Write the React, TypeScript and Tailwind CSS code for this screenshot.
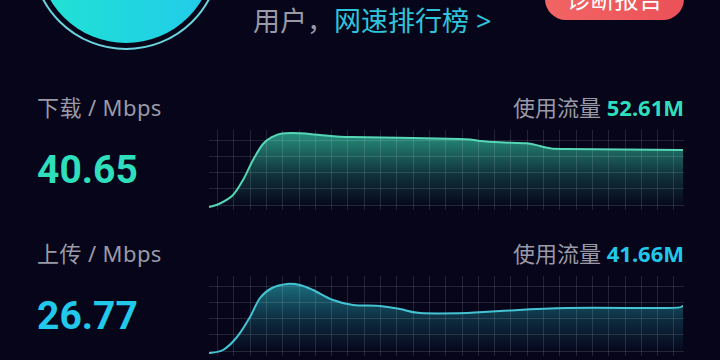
import React from "react";

type Pt = [number, number];

const DOWN: Pt[] = [
  [0, 77], [11, 73.5], [24, 65], [34, 50], [44, 30], [54, 14], [63, 7],
  [73, 3.5], [91, 3.3], [111, 5], [131, 6.7], [158, 7.3], [251, 9],
  [271, 11], [291, 12.3], [318, 13.3], [331, 16], [341, 18.3], [358, 19],
  [474, 20],
];

const UP: Pt[] = [
  [0, 77], [14, 74], [28, 61], [41, 41], [51, 22], [63, 12], [78, 8],
  [91, 9], [104, 14], [124, 24], [144, 29], [171, 30], [191, 33],
  [211, 37], [258, 37], [291, 35], [358, 32], [458, 32], [474, 30],
];

// catmull-rom -> cubic bezier
function smooth(pts: Pt[]) {
  let d = `M${pts[0][0]},${pts[0][1]}`;
  for (let i = 0; i < pts.length - 1; i++) {
    const p0 = pts[i - 1] ?? pts[i];
    const p1 = pts[i];
    const p2 = pts[i + 1];
    const p3 = pts[i + 2] ?? p2;
    const c1x = p1[0] + (p2[0] - p0[0]) / 6;
    const c1y = p1[1] + (p2[1] - p0[1]) / 6;
    const c2x = p2[0] - (p3[0] - p1[0]) / 6;
    const c2y = p2[1] - (p3[1] - p1[1]) / 6;
    d += ` C${c1x.toFixed(1)},${c1y.toFixed(1)} ${c2x.toFixed(1)},${c2y.toFixed(1)} ${p2[0]},${p2[1]}`;
  }
  return d;
}

function Chart({ id, pts, stroke, fill }: { id: string; pts: Pt[]; stroke: string; fill: string }) {
  const line = smooth(pts);
  const area = `${line} L474,78 L0,78 Z`;
  const rows = [10, 26, 42, 58, 75];
  const cols = Array.from({ length: 29 }, (_, i) => 8 + i * 16.3);
  return (
    <svg width="475" height="80" viewBox="0 0 475 80" className="block shrink-0">
      <defs>
        <linearGradient id={id} x1="0" y1="0" x2="0" y2="1">
          <stop offset="0" stopColor={fill} stopOpacity="0.9" />
          <stop offset="0.55" stopColor={fill} stopOpacity="0.3" />
          <stop offset="1" stopColor={fill} stopOpacity="0" />
        </linearGradient>
      </defs>
      <path d={area} fill={`url(#${id})`} />
      <g stroke="#ffffff" strokeOpacity="0.12" strokeWidth="1">
        {rows.map((y) => (
          <line key={`r${y}`} x1="0" x2="475" y1={y + 0.5} y2={y + 0.5} />
        ))}
        {cols.map((x) => (
          <line key={`c${x}`} x1={Math.round(x) + 0.5} x2={Math.round(x) + 0.5} y1="0" y2="80" />
        ))}
      </g>
      <path d={line} fill="none" stroke={stroke} strokeWidth="2" />
    </svg>
  );
}

function Section({
  label, value, usage, color, chart,
}: { label: string; value: string; usage: string; color: string; chart: React.ReactNode }) {
  return (
    <div>
      <div className="flex items-center justify-between text-[22px] leading-[28px] text-[#9a9aa6]">
        <span className="tracking-[0.4px]">{label}</span>
        <span>
          使用流量 <span className={`font-bold ${color}`}>{usage}</span>
        </span>
      </div>
      <div className="mt-[9px] flex items-center">
        <div className={`w-[172px] font-['Roboto',sans-serif] text-[39px] font-bold leading-none ${color}`}>{value}</div>
        {chart}
      </div>
    </div>
  );
}

export default function App() {
  return (
    <div
      className="h-[360px] w-[720px] overflow-hidden bg-[#06051a]"
      style={{ fontFamily: '"Noto Sans", "Noto Sans CJK SC", sans-serif' }}
    >
      {/* header */}
      <div className="flex h-[50px] items-start">
        <div className="-mt-[140px] ml-[31px] h-[190px] w-[190px] shrink-0 rounded-full border-2 border-[#6ad4dc] p-[5px]">
          <div className="h-full w-full rounded-full bg-gradient-to-r from-[#22e2d2] to-[#22cbea]" />
        </div>
        <div className="ml-[32px] mt-[5px] text-[27px] leading-[32px] text-[#9a9aa6]">
          用户，<span className="text-[#2ec4dc]">网速排行榜 &gt;</span>
        </div>
        <div className="-mt-[22px] ml-auto mr-[36px] flex h-[42px] w-[139px] items-center justify-center rounded-full bg-gradient-to-r from-[#f26464] to-[#ea5158] text-[24px] text-white">
          诊断报告
        </div>
      </div>

      <div className="px-[37px] pr-[36px]">
        <div className="mt-[43px]">
          <Section
            label="下载 / Mbps"
            value="40.65"
            usage="52.61M"
            color="text-[#2fdfbc]"
            chart={<Chart id="g1" pts={DOWN} stroke="#55d6b4" fill="#2a9e88" />}
          />
        </div>
        <div className="mt-[29px]">
          <Section
            label="上传 / Mbps"
            value="26.77"
            usage="41.66M"
            color="text-[#22c8ea]"
            chart={<Chart id="g2" pts={UP} stroke="#44c4d2" fill="#1c7888" />}
          />
        </div>
      </div>
    </div>
  );
}
